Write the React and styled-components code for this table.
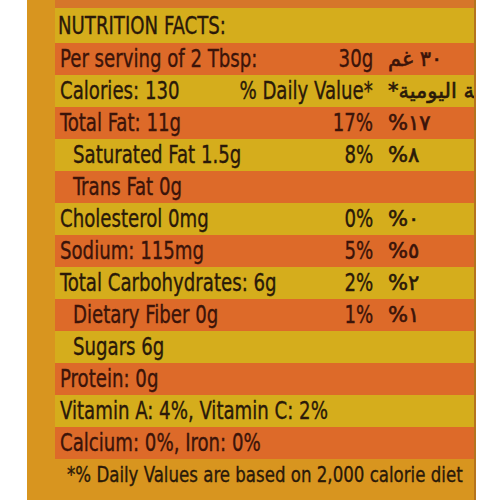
import React from 'react'
import styled, { createGlobalStyle } from 'styled-components'

const Global = createGlobalStyle`
  html, body {
    margin: 0;
    padding: 0;
    background: #ffffff;
  }
`

const rows = [
  { label: 'Per serving of 2 Tbsp:', value: '30g', ar: '٣٠ غم' },
  { label: 'Calories: 130', value: '% Daily Value*', ar: 'القيمة اليومية*' },
  { label: 'Total Fat: 11g', value: '17%', ar: '%١٧' },
  { label: 'Saturated Fat 1.5g', value: '8%', ar: '%٨', sub: true },
  { label: 'Trans Fat 0g', sub: true },
  { label: 'Cholesterol 0mg', value: '0%', ar: '%٠' },
  { label: 'Sodium: 115mg', value: '5%', ar: '%٥' },
  { label: 'Total Carbohydrates: 6g', value: '2%', ar: '%٢' },
  { label: 'Dietary Fiber 0g', value: '1%', ar: '%١', sub: true },
  { label: 'Sugars 6g', sub: true },
  { label: 'Protein: 0g' },
  { label: 'Vitamin A: 4%, Vitamin C: 2%' },
  { label: 'Calcium: 0%, Iron: 0%' },
]

function App() {
  return (
    <>
      <Global />
      <Panel>
        <TopStrip />
        <Title>
          <Squeeze>NUTRITION FACTS:</Squeeze>
        </Title>
        {rows.map((r, i) => (
          <Row key={r.label} tone={i % 2 === 0 ? 'orange' : 'yellow'}>
            <Label sub={r.sub}>
              <Squeeze>{r.label}</Squeeze>
            </Label>
            <Value>{r.value && <Squeeze origin="right">{r.value}</Squeeze>}</Value>
            <Arabic>
              {r.ar && <ArText dir={r.ar.startsWith('%') ? 'ltr' : 'rtl'}>{r.ar}</ArText>}
            </Arabic>
          </Row>
        ))}
        <Footnote>
          <Squeeze>*% Daily Values are based on 2,000 calorie diet</Squeeze>
        </Footnote>
      </Panel>
    </>
  )
}

const Panel = styled.div`
  margin-left: 27px;
  height: 500px;
  width: 419px;
  overflow: hidden;
  background: #d8951f;
  border-right: 2px solid #b5741e;
  padding-left: 28px;
  display: flex;
  flex-direction: column;
  font-family: "DejaVu Sans Condensed", "DejaVu Sans", sans-serif;
  font-size: 24px;
  color: #2a1909;
  -webkit-text-stroke: 0.35px currentColor;
`

const Squeeze = styled.span`
  display: inline-block;
  white-space: nowrap;
  transform: scaleX(0.84);
  transform-origin: ${p => p.origin || 'left'} center;
`

const TopStrip = styled.div`
  height: 8px;
  background: #d6762a;
`

const Title = styled.div`
  height: 35px;
  line-height: 37px;
  padding-left: 3px;
  background: #d5ad1c;
  white-space: nowrap;
`

const Row = styled.div`
  height: 32px;
  line-height: 32px;
  display: grid;
  grid-template-columns: 1fr auto 86px;
  column-gap: 15px;
  background: ${p => (p.tone === 'orange' ? '#dd6a29' : '#d5ad1c')};
  color: ${p => (p.tone === 'orange' ? '#3b1409' : '#2a1909')};
  white-space: nowrap;
`

const Label = styled.div`
  min-width: 0;
  padding-left: ${p => (p.sub ? '18px' : '5px')};
`

const Value = styled.div`
  text-align: right;
`

const Arabic = styled.div`
  overflow: hidden;
  direction: ltr;
  font-family: "DejaVu Sans", "Noto Sans", sans-serif;
  font-size: 21px;
  -webkit-text-stroke: 0.6px currentColor;
`

const ArText = styled.span`
  display: inline-block;
  white-space: nowrap;
`

const Footnote = styled.div`
  height: 32px;
  line-height: 32px;
  padding-left: 12px;
  font-size: 22px;
  white-space: nowrap;
`

export default App
